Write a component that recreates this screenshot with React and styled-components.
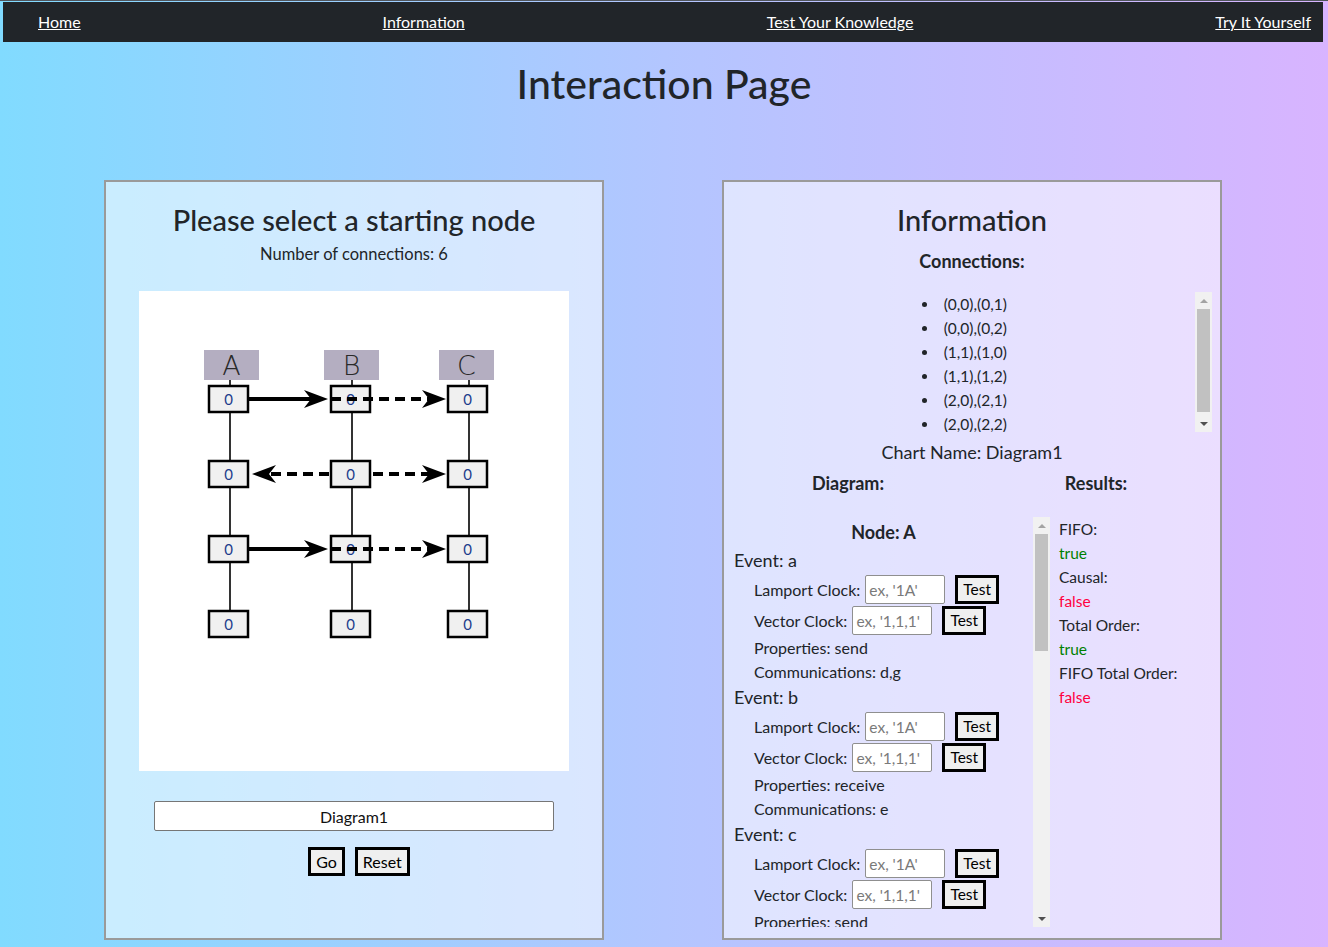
import React from 'react';
import styled, { createGlobalStyle } from 'styled-components';

const GlobalStyle = createGlobalStyle`
  html, body {
    margin: 0;
    padding: 0;
  }
  body {
    min-height: 947px;
    font-family: Lato, "Liberation Sans", sans-serif;
    color: #212529;
    background: linear-gradient(90deg, #81dbff 0%, #b3c6ff 50%, #d8b4ff 100%);
    border-top: 1px solid #50555c;
    box-sizing: border-box;
  }
  * {
    box-sizing: border-box;
  }
`;

// Top navigation
const NavBar = styled.nav`
  margin: 1px 5px 0 3px;
  height: 40px;
  background: #212529;
  display: flex;
  justify-content: space-between;
  align-items: center;
  padding: 0 12px 1px 35px;
`;

const NavLink = styled.a`
  color: #fff;
  font-size: 16px;
  text-decoration: underline;
`;

const PageTitle = styled.h1`
  margin: 18px 0 0;
  text-align: center;
  font-size: 41px;
  line-height: 48px;
  font-weight: 500;
`;

const Panels = styled.div`
  display: flex;
  justify-content: center;
  gap: 118px;
  margin-top: 72px;
  padding-right: 2px;
`;

const Panel = styled.section`
  width: 500px;
  height: 760px;
  border: 2px solid #9a9a9a;
  background: rgba(255, 255, 255, 0.55);
  display: flex;
  flex-direction: column;
  align-items: center;
`;

const PanelTitle = styled.h2`
  margin: 21px 0 0;
  font-size: 29px;
  line-height: 34px;
  font-weight: 500;
  text-align: center;
`;

const SubText = styled.p`
  margin: ${(p) => p.$mt || 0}px 0 0;
  font-size: ${(p) => p.$size || 16.5}px;
  line-height: 24px;
  font-weight: ${(p) => (p.$bold ? 700 : 400)};
  text-align: center;
`;

// Scroll frame: content plus a classic scrollbar rail (browser one is hidden here)
const ScrollFrame = styled.div`
  display: flex;
  height: ${(p) => p.$h}px;
  width: ${(p) => (p.$w ? `${p.$w}px` : 'auto')};
  align-self: stretch;
  margin: ${(p) => p.$margin};
`;

const ScrollContent = styled.div`
  flex: 1;
  min-width: 0;
  overflow: hidden;
`;

const Rail = styled.div`
  width: 17px;
  flex: none;
  background: #f1f1f1;
  display: flex;
  flex-direction: column;
`;

const RailArrow = styled.div`
  height: 17px;
  flex: none;
  display: flex;
  align-items: center;
  justify-content: center;

  &::before {
    content: '';
    border-left: 4px solid transparent;
    border-right: 4px solid transparent;
    ${(p) =>
      p.$down
        ? 'border-top: 4px solid #505050;'
        : 'border-bottom: 4px solid #a3a3a3;'}
  }
`;

const RailTrack = styled.div`
  flex: 1;
  padding: 0 2px;
`;

const RailThumb = styled.div`
  height: ${(p) => p.$h}px;
  background: #c1c1c1;
`;

const ScrollBox = ({ h, w, margin, thumb, children }) => (
  <ScrollFrame $h={h} $w={w} $margin={margin}>
    <ScrollContent>{children}</ScrollContent>
    <Rail aria-hidden="true">
      <RailArrow />
      <RailTrack>
        <RailThumb $h={thumb} />
      </RailTrack>
      <RailArrow $down />
    </Rail>
  </ScrollFrame>
);

// Left panel pieces
const Canvas = styled.div`
  margin-top: 25px;
  width: 430px;
  height: 480px;
  background: #fff;
`;

const NameInput = styled.input`
  margin-top: 30px;
  width: 400px;
  height: 30px;
  border: 1px solid #767676;
  border-radius: 2px;
  background: #fff;
  text-align: center;
  font-family: inherit;
  font-size: 16px;
  color: #111;
`;

const ButtonRow = styled.div`
  margin-top: 16px;
  padding-left: 10px;
  display: flex;
  gap: 10px;
`;

const BoxButton = styled.button`
  height: 29px;
  padding: 0 ${(p) => p.$pad || 5}px;
  border: 3px solid #000;
  background: #efefef;
  font-family: inherit;
  font-size: ${(p) => p.$size || 16}px;
  color: #000;
  line-height: 1;
`;

// Right panel pieces
const ConnList = styled.ul`
  margin: 0;
  padding: 0 0 0 10px;
  list-style: disc inside;
  text-align: center;
  font-size: 15.5px;
  line-height: 24px;

  li {
    height: 24px;
  }
`;

const HeadRow = styled.div`
  margin-top: 7px;
  align-self: stretch;
  display: grid;
  grid-template-columns: 1fr 1fr;
`;

const ContentRow = styled.div`
  margin-top: 22px;
  align-self: stretch;
  display: flex;
`;

const NodeTitle = styled.div`
  text-align: center;
  font-size: 18px;
  font-weight: 700;
  line-height: 30px;
`;

const EventTitle = styled.div`
  font-size: 18px;
  line-height: 27px;
`;

const EventLine = styled.div`
  padding-left: 20px;
  font-size: 16px;
  line-height: 24px;
`;

const ClockRow = styled.div`
  padding-left: 20px;
  height: 31px;
  display: flex;
  align-items: center;
  font-size: 16px;
`;

const ClockInput = styled.input`
  margin: 0 10px 0 5px;
  width: 80px;
  height: 29px;
  border: 1px solid #8f8f8f;
  border-radius: 2px;
  padding: 0 3px;
  font-family: inherit;
  font-size: 15.5px;
  background: #fff;

  &::placeholder {
    color: #7a7a7a;
  }
`;

const Results = styled.div`
  padding-left: 9px;
  font-size: 15.5px;
  line-height: 24px;
`;

const ResultValue = styled.div`
  color: ${(p) => (p.$ok ? '#008000' : '#ff0040')};
`;

const columns = [
  { label: 'A', x: 91, box: [65, 120] },
  { label: 'B', x: 213, box: [185, 240] },
  { label: 'C', x: 330, box: [300, 355] },
];
const rows = [108, 183, 258, 333];

const Arrowhead = ({ tip, y, dir = 1 }) => (
  <path
    d={`M${tip} ${y} L${tip - dir * 24} ${y - 9} L${tip - dir * 17} ${y} L${tip - dir * 24} ${y + 9} Z`}
    fill="#000"
  />
);

const Diagram = () => (
  <svg width="430" height="480" viewBox="0 0 430 480">
    {columns.map((c) => (
      <g key={c.label}>
        <rect x={c.box[0]} y="59" width={c.box[1] - c.box[0]} height="30" fill="#b4aec1" />
        <text
          x={(c.box[0] + c.box[1]) / 2}
          y="84"
          textAnchor="middle"
          fontFamily="'DejaVu Sans', sans-serif"
          fontWeight="200"
          fontSize="27"
          fill="#2a2a2a"
        >
          {c.label}
        </text>
        <line x1={c.x} y1="89" x2={c.x} y2="330" stroke="#333" strokeWidth="2" />
      </g>
    ))}
    {columns.map((c) =>
      rows.map((y) => (
        <g key={c.label + y}>
          <rect x={c.x - 21} y={y - 13} width="39" height="26" fill="#f0f0f0" stroke="#000" strokeWidth="2.5" />
          <text x={c.x - 1.5} y={y + 5.5} textAnchor="middle" fontSize="15" fontFamily="Lato, sans-serif" fill="#1c3c8c">
            0
          </text>
        </g>
      ))
    )}
    {[108, 258].map((y) => (
      <g key={'r' + y}>
        <line x1="110" y1={y} x2="175" y2={y} stroke="#000" strokeWidth="4" />
        <Arrowhead tip={189} y={y} />
        <line x1="192" y1={y} x2="295" y2={y} stroke="#000" strokeWidth="4" strokeDasharray="10 6" />
        <Arrowhead tip={307} y={y} />
      </g>
    ))}
    <line x1="190" y1="183" x2="125" y2="183" stroke="#000" strokeWidth="4" strokeDasharray="10 6" />
    <Arrowhead tip={113} y={183} dir={-1} />
    <line x1="234" y1="183" x2="295" y2="183" stroke="#000" strokeWidth="4" strokeDasharray="10 6" />
    <Arrowhead tip={307} y={183} />
  </svg>
);

const connections = ['(0,0),(0,1)', '(0,0),(0,2)', '(1,1),(1,0)', '(1,1),(1,2)', '(2,0),(2,1)', '(2,0),(2,2)'];

const nodes = [
  {
    name: 'A',
    events: [
      { id: 'a', prop: 'send', comm: 'd,g' },
      { id: 'b', prop: 'receive', comm: 'e' },
      { id: 'c', prop: 'send', comm: 'f,i' },
    ],
  },
  {
    name: 'B',
    events: [
      { id: 'd', prop: 'receive', comm: 'a' },
      { id: 'e', prop: 'send', comm: 'b,h' },
      { id: 'f', prop: 'receive', comm: 'c' },
    ],
  },
  {
    name: 'C',
    events: [
      { id: 'g', prop: 'receive', comm: 'a' },
      { id: 'h', prop: 'receive', comm: 'e' },
      { id: 'i', prop: 'receive', comm: 'c' },
    ],
  },
];

const results = [
  { label: 'FIFO:', ok: true },
  { label: 'Causal:', ok: false },
  { label: 'Total Order:', ok: true },
  { label: 'FIFO Total Order:', ok: false },
];

const App = () => {
  return (
    <>
      <GlobalStyle />
      <NavBar>
        <NavLink href="#">Home</NavLink>
        <NavLink href="#">Information</NavLink>
        <NavLink href="#">Test Your Knowledge</NavLink>
        <NavLink href="#">Try It Yourself</NavLink>
      </NavBar>

      <PageTitle>Interaction Page</PageTitle>

      <Panels>
        {/* Diagram picker */}
        <Panel>
          <PanelTitle>Please select a starting node</PanelTitle>
          <SubText $mt={5}>Number of connections: 6</SubText>
          <Canvas>
            <Diagram />
          </Canvas>
          <NameInput defaultValue="Diagram1" />
          <ButtonRow>
            <BoxButton>Go</BoxButton>
            <BoxButton>Reset</BoxButton>
          </ButtonRow>
        </Panel>

        {/* Information */}
        <Panel>
          <PanelTitle>Information</PanelTitle>
          <SubText $mt={12} $size={18} $bold>Connections:</SubText>
          <ScrollBox h={140} margin="19px 8px 0 0" thumb={103}>
            <ConnList>
              {connections.map((c) => (
                <li key={c}>{c}</li>
              ))}
            </ConnList>
          </ScrollBox>
          <SubText $mt={8} $size={18}>Chart Name: Diagram1</SubText>
          <HeadRow>
            <SubText $size={18} $bold>Diagram:</SubText>
            <SubText $size={18} $bold>Results:</SubText>
          </HeadRow>
          <ContentRow>
            <ScrollBox h={410} w={316} margin="0 0 0 10px" thumb={117}>
              {nodes.map((n) => (
                <div key={n.name}>
                  <NodeTitle>Node: {n.name}</NodeTitle>
                  {n.events.map((e) => (
                    <div key={e.id}>
                      <EventTitle>Event: {e.id}</EventTitle>
                      <ClockRow>
                        Lamport Clock:
                        <ClockInput placeholder="ex, '1A'" />
                        <BoxButton $size={15.5}>Test</BoxButton>
                      </ClockRow>
                      <ClockRow>
                        Vector Clock:
                        <ClockInput placeholder="ex, '1,1,1'" />
                        <BoxButton $size={15.5}>Test</BoxButton>
                      </ClockRow>
                      <EventLine>Properties: {e.prop}</EventLine>
                      <EventLine>Communications: {e.comm}</EventLine>
                    </div>
                  ))}
                </div>
              ))}
            </ScrollBox>
            <Results>
              {results.map((r) => (
                <div key={r.label}>
                  <div>{r.label}</div>
                  <ResultValue $ok={r.ok}>{String(r.ok)}</ResultValue>
                </div>
              ))}
            </Results>
          </ContentRow>
        </Panel>
      </Panels>
    </>
  );
};

export default App;
